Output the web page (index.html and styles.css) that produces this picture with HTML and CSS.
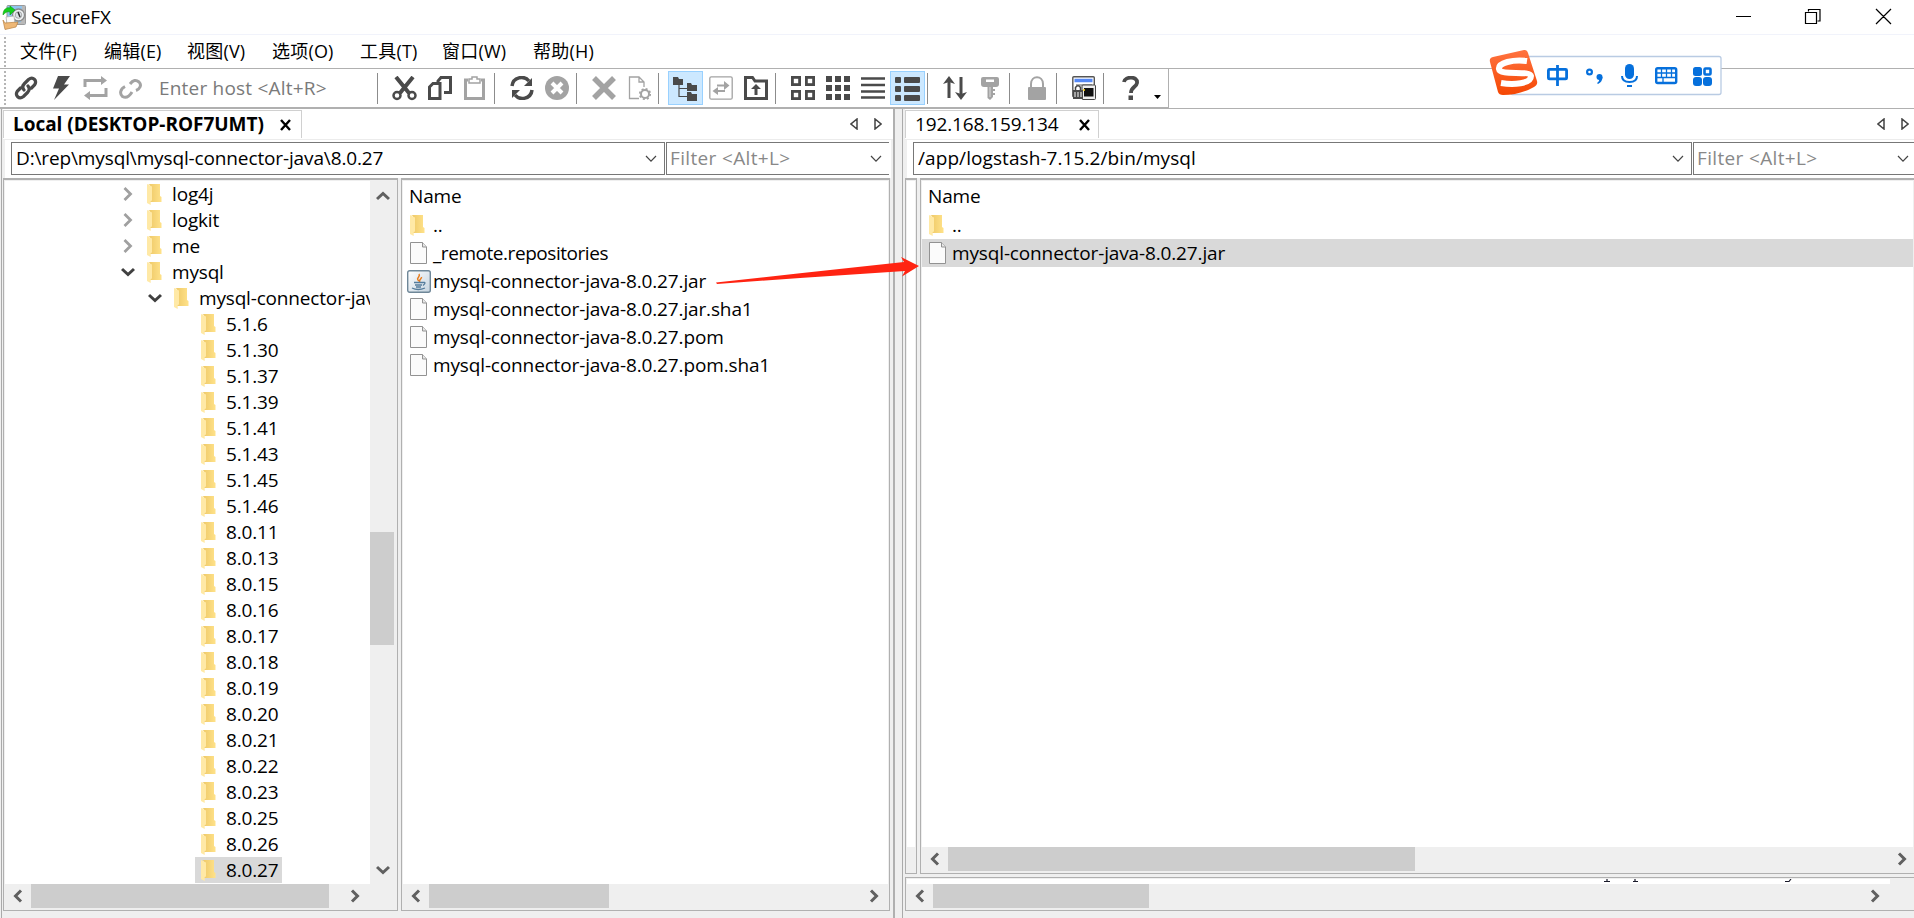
FILE: index.html
```html
<!DOCTYPE html>
<html lang="zh-CN">
<head>
<meta charset="utf-8">
<title>SecureFX</title>
<link rel="stylesheet" href="styles.css">
</head>
<body>
<svg class="defs" width="0" height="0">
  <defs>
    <linearGradient id="gold" x1="0" y1="0" x2="1" y2="0"><stop offset="0" stop-color="#edc765"/><stop offset="1" stop-color="#ffe28a"/></linearGradient>
    <linearGradient id="orange" x1="0" y1="0" x2="0" y2="1"><stop offset="0" stop-color="#ff7340"/><stop offset="1" stop-color="#f54703"/></linearGradient>
    <linearGradient id="steel" x1="0" y1="0" x2="1" y2="1"><stop offset="0" stop-color="#fff"/><stop offset="1" stop-color="#c5d3df"/></linearGradient>
    <symbol id="folder" viewBox="0 0 15 21"><path d="M1 0H13V12L14.500 13V18H3V1Z" fill="url(#gold)"/><path d="M0 0L5 2.500V16.500L3.700 17V21L0 19Z" fill="#ffe9a6"/></symbol>
    <symbol id="file" viewBox="0 0 18 22"><path d="M.5.5H12.500L16.500 5V21.500H.5Z" fill="#fbfbfb" stroke="#929292"/><path d="M12.500.5V5H16.500" fill="#e7e7e7" stroke="#929292"/></symbol>
    <symbol id="right" viewBox="0 0 10 14"><path d="M1.500 1L7.500 7L1.500 13" fill="none" stroke="currentColor" stroke-width="2.800"/></symbol>
    <symbol id="left" viewBox="0 0 10 14"><path d="M8 1.500L2.500 7L8 12.500" fill="none" stroke="#606060" stroke-width="3"/></symbol>
    <symbol id="next" viewBox="0 0 10 14"><path d="M2 1.500L7.500 7L2 12.500" fill="none" stroke="#606060" stroke-width="3"/></symbol>
    <symbol id="down" viewBox="0 0 14 10"><path d="M1 2L7 7.500L13 2" fill="none" stroke="currentColor" stroke-width="3"/></symbol>
    <symbol id="chev" viewBox="0 0 12 8"><path d="M1 1L6 6.200L11 1" fill="none" stroke="#444" stroke-width="1.200"/></symbol>
    <symbol id="cross" viewBox="0 0 12 12"><path d="M1.500 1L10.500 11M10.500 1L1.500 11" stroke="#000" stroke-width="2.400"/></symbol>
    <symbol id="navs" viewBox="0 0 32 12"><path d="M7 1V11L1 6ZM25 1V11L31 6Z" fill="none" stroke="#444" stroke-width="1.500"/></symbol>
  </defs>
</svg>

<header class="titlebar">
  <svg class="appicon" width="24" height="25" viewBox="0 0 24 25"><rect x="5" y=".5" width="18.500" height="19" rx="1" fill="#8fc4ef" stroke="#9a9a9a"/><path d="M20 1H23V19H12L19 17Z" fill="#b9b9b9"/><circle cx="16.500" cy="10" r="6" fill="#eef2f4" stroke="#8a8a8a" stroke-width="1.300"/><circle cx="16.500" cy="10" r="3.300" fill="#dbe2e7" stroke="#999" stroke-width=".8"/><path d="M16 7L18 12" stroke="#333" stroke-width="1.500"/><path d="M1 10C1 4 5 2 8 3V1L13 5L8 10V7C5 6 3 8 1 10Z" fill="#16cf1e" stroke="#0aa010" stroke-width=".6"/><path d="M4 12L12 11L13 19H5Z" fill="#fafafa" stroke="#aaa" stroke-width=".7"/><path d="M1 15L3 18L16 17L14 22L3 24.500Z" fill="#eeb877" stroke="#b98140" stroke-width=".7"/></svg>
  <span class="apptitle">SecureFX</span>
  <svg class="winctl" width="156" height="18" viewBox="0 0 156 18" fill="none" stroke="#000" stroke-width="1.200"><path d="M0 8.500H15M72.500 3.500V1.500H84V13H81.500M69.500 4.500H80.500V15.500H69.500ZM140 1L155 16M155 1L140 16"/></svg>
</header>

<nav class="menubar"><i class="grip"></i><span>文件(F)</span><span>编辑(E)</span><span>视图(V)</span><span>选项(O)</span><span>工具(T)</span><span>窗口(W)</span><span>帮助(H)</span></nav>

<div class="toolrow">
 <div class="toolbar">
  <i class="grip"></i>
  <b class="tool"><svg width="24" height="24" viewBox="0 0 24 24" fill="none" stroke="#4a4a4a" stroke-width="3.200" stroke-linecap="round"><path d="M10 14C8 11.500 8.500 9.500 10.500 7.500L14.500 3.500C19 0 23.500 4.500 20.500 9L17.500 12M14 10C16 12.500 15.500 14.500 13.500 16.500L9.500 20.500C5 24 .500 19.500 3.500 15L6.500 12"/></svg></b>
  <b class="tool"><svg width="24" height="24" viewBox="0 0 24 24"><path d="M9 0H21L15 8.500H20L5 24L10 12.500H4Z" fill="#4a4a4a"/></svg></b>
  <b class="tool"><svg width="25" height="24" viewBox="0 0 25 24"><path d="M2 11V4.500H19M23 12V19.500H6" fill="none" stroke="#a3a3a3" stroke-width="3"/><path d="M18 0L24 4.500L18 9ZM7 15L1 19.500L7 24Z" fill="#a3a3a3"/></svg></b>
  <b class="tool"><svg width="24" height="24" viewBox="0 0 24 24" fill="none" stroke="#a3a3a3" stroke-width="3"><path d="M11 8C14 4 17 3.500 20 6C23 9 21 13 17 14.500M13 16C10 21 7 22.500 3.500 20.500C.500 18 1 13 6 10.500"/></svg></b>
  <span class="host">Enter host &lt;Alt+R&gt;</span>
  <i class="sep"></i>
  <b class="tool"><svg width="25" height="25" viewBox="0 0 25 25" fill="none" stroke="#4a4a4a"><path d="M4 1L17 17M21 1L8 17" stroke-width="4"/><circle cx="5" cy="19.500" r="3.500" stroke-width="2.500"/><circle cx="20" cy="19.500" r="3.500" stroke-width="2.500"/></svg></b>
  <b class="tool"><svg width="24" height="24" viewBox="0 0 24 24" fill="none" stroke="#4a4a4a" stroke-width="3"><path d="M1.500 11L5 7.500H12V22.500H1.500ZM10 6V5L13 1.500H22.500V16.500H16"/></svg></b>
  <b class="tool"><svg width="24" height="24" viewBox="0 0 24 24" fill="none" stroke="#a3a3a3"><path d="M5 4H2.500V22.500H20.500V4H18" stroke-width="3"/><path d="M6 3H9V1H14V3H17V7H6Z" stroke-width="1.500"/></svg></b>
  <i class="sep"></i>
  <b class="tool"><svg width="24" height="24" viewBox="0 0 24 24"><path d="M2 10C3 1 14-1 19 5M22 14C21 23 10 25 5 19" fill="none" stroke="#4a4a4a" stroke-width="3.500"/><path d="M22 2V10H14ZM2 22V14H10Z" fill="#4a4a4a"/></svg></b>
  <b class="tool"><svg width="24" height="24" viewBox="0 0 24 24"><circle cx="12" cy="12" r="12" fill="#a3a3a3"/><path d="M7 7L17 17M17 7L7 17" stroke="#fff" stroke-width="4"/></svg></b>
  <i class="sep"></i>
  <b class="tool"><svg width="24" height="24" viewBox="0 0 24 24"><path d="M2 2L22 22M22 2L2 22" stroke="#a3a3a3" stroke-width="5.500"/></svg></b>
  <b class="tool"><svg width="24" height="24" viewBox="0 0 24 24" fill="none" stroke="#a3a3a3"><path d="M12 22.500H2.500V1H12L17 6V11M12 1V6H17" stroke-width="1.300"/><circle cx="18" cy="18" r="4" stroke-width="2"/><circle cx="18" cy="18" r="5.200" stroke-width="1.800" stroke-dasharray="2 2.080"/><circle cx="18" cy="18" r="2.300" fill="#fff" stroke="none"/></svg></b>
  <i class="sep"></i>
  <b class="tool on"><svg width="25" height="25" viewBox="0 0 25 25" fill="#4a4a4a"><path d="M0 1H5L6 3H10V9H0ZM14 7H18L19 9H24V15H14ZM14 16H18L19 18H24V25H14Z"/><path d="M6 8V20.500H14M6 12.500H14" fill="none" stroke="#4a4a4a" stroke-width="1.200"/></svg></b>
  <b class="tool"><svg width="24" height="24" viewBox="0 0 24 24"><rect x=".8" y=".8" width="22.400" height="22.400" rx="1.500" fill="none" stroke="#a3a3a3" stroke-width="1.300"/><path d="M8 9.500H17M7 15H16" stroke="#a3a3a3" stroke-width="2.200"/><path d="M15 5L20.500 9.500L15 14ZM9 11L3.500 15L9 19Z" fill="#a3a3a3"/></svg></b>
  <b class="tool"><svg width="24" height="24" viewBox="0 0 24 24"><path d="M1.500 22.500V1.500H8.500L11 5H22.500V22.500Z" fill="none" stroke="#4a4a4a" stroke-width="3"/><path d="M12 8L17 13H13.500V19H10.500V13H7Z" fill="#4a4a4a"/></svg></b>
  <i class="sep"></i>
  <b class="tool"><svg width="24" height="24" viewBox="0 0 24 24" fill="none" stroke="#4a4a4a" stroke-width="2.800"><rect x="1.400" y="1.400" width="7.200" height="7.200"/><rect x="15.400" y="1.400" width="7.200" height="7.200"/><rect x="1.400" y="15.400" width="7.200" height="7.200"/><rect x="15.400" y="15.400" width="7.200" height="7.200"/></svg></b>
  <b class="tool"><svg width="24" height="24" viewBox="0 0 24 24"><path d="M0 3H6M9 3H15M18 3H24M0 12H6M9 12H15M18 12H24M0 21H6M9 21H15M18 21H24" stroke="#4a4a4a" stroke-width="5.800"/></svg></b>
  <b class="tool"><svg width="24" height="24" viewBox="0 0 24 24"><path d="M0 2.500H24M0 9H24M0 15.500H24M0 21.500H24" stroke="#4a4a4a" stroke-width="2.600"/></svg></b>
  <b class="tool on"><svg width="25" height="25" viewBox="0 0 25 25" fill="#4a4a4a"><rect y="1" width="6" height="6" rx="1"/><rect x="9" y="1" width="16" height="6" rx="1"/><rect y="10" width="6" height="6" rx="1"/><rect x="9" y="10" width="16" height="6" rx="1"/><rect y="19" width="6" height="6" rx="1"/><rect x="9" y="19" width="16" height="6" rx="1"/></svg></b>
  <i class="sep"></i>
  <b class="tool"><svg width="24" height="24" viewBox="0 0 24 24"><path d="M6 4V22M18 1V20" stroke="#4a4a4a" stroke-width="3"/><path d="M6 0L12 8L6 6L0 8ZM18 24L12 16L18 18L24 16Z" fill="#4a4a4a"/></svg></b>
  <b class="tool"><svg width="24" height="24" viewBox="0 0 24 24"><path fill-rule="evenodd" d="M5 1H19Q21 1 21 3V8Q21 11 18 11H15V21L12 24L9.500 22V11H6Q3 11 3 8V3Q3 1 5 1ZM8 3.500V6H16V3.500Z" fill="#a3a3a3"/><path d="M12 11V21" stroke="#ddd"/><path d="M14 14H17M14 18H17" stroke="#a3a3a3" stroke-width="2"/></svg></b>
  <i class="sep"></i>
  <b class="tool"><svg width="24" height="24" viewBox="0 0 24 24"><rect x="3" y="11" width="18" height="13" rx="1" fill="#a3a3a3"/><path d="M6 12V8C6-1 18-1 18 8V12" fill="none" stroke="#a3a3a3" stroke-width="2"/></svg></b>
  <i class="sep"></i>
  <b class="tool"><svg width="24" height="24" viewBox="0 0 24 24"><rect x=".8" y=".8" width="21.500" height="20" rx="1" fill="#fff" stroke="#555" stroke-width="1.400"/><path d="M2.500 4.500H20.500" stroke="#5588f5" stroke-width="3.500"/><path d="M4 9H20" stroke="#555"/><rect x="10" y="9" width="13.500" height="14.500" rx="1" fill="#eee" stroke="#444"/><rect x="12" y="12" width="9.500" height="8.500" fill="#111"/><path d="M3.500 14V11.500Q6 8 8.500 11.500V14" fill="none" stroke="#444" stroke-width="1.500"/><path d="M1 14H11V23H1Z" fill="#4a4a4a"/><path d="M3 16V21M6 16V21M9 16V21" stroke="#fff"/><circle cx="12" cy="14" r="1" fill="#ffd51b"/></svg></b>
  <i class="sep"></i>
  <b class="tool"><svg width="24" height="24" viewBox="0 0 24 24"><path d="M5 6C6 0 19 0 18 7C17.500 11 12 11 12 17" fill="none" stroke="#4a4a4a" stroke-width="3.800"/><rect x="9.500" y="19.500" width="4.500" height="4.500" fill="#4a4a4a"/></svg></b>
  <svg class="more" width="8" height="5" viewBox="0 0 8 5"><path d="M0 0H7L3.500 4Z"/></svg>
 </div>
</div>

<main class="work">
 <section class="side local">
  <div class="tabs"><div class="tab bold"><span class="t-tab1">Local (DESKTOP-ROF7UMT)</span><svg width="13" height="12"><use href="#cross"/></svg></div><svg class="navs" width="32" height="12"><use href="#navs"/></svg></div>
  <div class="fields"><div class="combo path"><span class="t-path1">D:\rep\mysql\mysql-connector-java\8.0.27</span><svg width="12" height="8"><use href="#chev"/></svg></div><div class="combo filter"><span>Filter &lt;Alt+L&gt;</span><svg width="12" height="8"><use href="#chev"/></svg></div></div>
  <div class="panes">
   <div class="pane tree">
    <div class="treetop">
     <div class="rows">
      <div class="row l0"><svg class="exp" width="10" height="14"><use href="#right"/></svg><svg width="15" height="21"><use href="#folder"/></svg><span>log4j</span></div>
      <div class="row l0"><svg class="exp" width="10" height="14"><use href="#right"/></svg><svg width="15" height="21"><use href="#folder"/></svg><span>logkit</span></div>
      <div class="row l0"><svg class="exp" width="10" height="14"><use href="#right"/></svg><svg width="15" height="21"><use href="#folder"/></svg><span>me</span></div>
      <div class="row l0"><svg class="exp open" width="14" height="10"><use href="#down"/></svg><svg width="15" height="21"><use href="#folder"/></svg><span>mysql</span></div>
      <div class="row l1"><svg class="exp open" width="14" height="10"><use href="#down"/></svg><svg width="15" height="21"><use href="#folder"/></svg><span>mysql-connector-java</span></div>
      <div class="row l2"><svg width="15" height="21"><use href="#folder"/></svg><span>5.1.6</span></div>
      <div class="row l2"><svg width="15" height="21"><use href="#folder"/></svg><span>5.1.30</span></div>
      <div class="row l2"><svg width="15" height="21"><use href="#folder"/></svg><span>5.1.37</span></div>
      <div class="row l2"><svg width="15" height="21"><use href="#folder"/></svg><span>5.1.39</span></div>
      <div class="row l2"><svg width="15" height="21"><use href="#folder"/></svg><span>5.1.41</span></div>
      <div class="row l2"><svg width="15" height="21"><use href="#folder"/></svg><span>5.1.43</span></div>
      <div class="row l2"><svg width="15" height="21"><use href="#folder"/></svg><span>5.1.45</span></div>
      <div class="row l2"><svg width="15" height="21"><use href="#folder"/></svg><span>5.1.46</span></div>
      <div class="row l2"><svg width="15" height="21"><use href="#folder"/></svg><span>8.0.11</span></div>
      <div class="row l2"><svg width="15" height="21"><use href="#folder"/></svg><span>8.0.13</span></div>
      <div class="row l2"><svg width="15" height="21"><use href="#folder"/></svg><span>8.0.15</span></div>
      <div class="row l2"><svg width="15" height="21"><use href="#folder"/></svg><span>8.0.16</span></div>
      <div class="row l2"><svg width="15" height="21"><use href="#folder"/></svg><span>8.0.17</span></div>
      <div class="row l2"><svg width="15" height="21"><use href="#folder"/></svg><span>8.0.18</span></div>
      <div class="row l2"><svg width="15" height="21"><use href="#folder"/></svg><span>8.0.19</span></div>
      <div class="row l2"><svg width="15" height="21"><use href="#folder"/></svg><span>8.0.20</span></div>
      <div class="row l2"><svg width="15" height="21"><use href="#folder"/></svg><span>8.0.21</span></div>
      <div class="row l2"><svg width="15" height="21"><use href="#folder"/></svg><span>8.0.22</span></div>
      <div class="row l2"><svg width="15" height="21"><use href="#folder"/></svg><span>8.0.23</span></div>
      <div class="row l2"><svg width="15" height="21"><use href="#folder"/></svg><span>8.0.25</span></div>
      <div class="row l2"><svg width="15" height="21"><use href="#folder"/></svg><span>8.0.26</span></div>
      <div class="row l2 current"><svg width="15" height="21"><use href="#folder"/></svg><span>8.0.27</span></div>
     </div>
     <div class="vscroll"><svg class="up" width="14" height="10"><use href="#down"/></svg><i class="vthumb"></i><svg width="14" height="10"><use href="#down"/></svg></div>
    </div>
    <div class="hscroll"><svg width="10" height="14"><use href="#left"/></svg><i class="thumb w298"></i><svg class="end" width="10" height="14"><use href="#next"/></svg></div>
   </div>
   <div class="pane list">
    <div class="files">
     <div class="head">Name</div>
     <div class="item"><b><svg width="15" height="21"><use href="#folder"/></svg></b><span>..</span></div>
     <div class="item repo"><b><svg width="18" height="22"><use href="#file"/></svg></b><span>_remote.repositories</span></div>
     <div class="item"><b><svg class="jar" width="24" height="23" viewBox="0 0 24 23"><rect x=".7" y=".7" width="22.600" height="21.600" rx="2" fill="url(#steel)" stroke="#6f8798" stroke-width="1.400"/><path d="M12 11C8 8 14 7 12 4M13 12C11 10 15 9 14.500 7" fill="none" stroke="#e87d1e" stroke-width="1.500"/><path d="M7 12.500H16M8 15H15M9 17H14M16 12.500Q20 12 16 15.500M5 18Q11 21 18 18" fill="none" stroke="#557c9c" stroke-width="1.300"/></svg></b><span>mysql-connector-java-8.0.27.jar</span></div>
     <div class="item"><b><svg width="18" height="22"><use href="#file"/></svg></b><span>mysql-connector-java-8.0.27.jar.sha1</span></div>
     <div class="item"><b><svg width="18" height="22"><use href="#file"/></svg></b><span>mysql-connector-java-8.0.27.pom</span></div>
     <div class="item"><b><svg width="18" height="22"><use href="#file"/></svg></b><span>mysql-connector-java-8.0.27.pom.sha1</span></div>
    </div>
    <div class="hscroll"><svg width="10" height="14"><use href="#left"/></svg><i class="thumb w180"></i><svg width="10" height="14"><use href="#next"/></svg></div>
   </div>
  </div>
 </section>
 <i class="splitter"></i>
 <section class="side remote">
  <div class="tabs"><div class="tab"><span class="t-tab2">192.168.159.134</span><svg width="13" height="12"><use href="#cross"/></svg></div><svg class="navs" width="32" height="12"><use href="#navs"/></svg></div>
  <div class="fields"><div class="combo path"><span class="t-path2">/app/logstash-7.15.2/bin/mysql</span><svg width="12" height="8"><use href="#chev"/></svg></div><div class="combo filter"><span>Filter &lt;Alt+L&gt;</span><svg width="12" height="8"><use href="#chev"/></svg></div></div>
  <div class="panes">
   <div class="pane sliver"><div class="files"></div><div class="stub"></div></div>
   <div class="pane list">
    <div class="files">
     <div class="head">Name</div>
     <div class="item"><b><svg width="15" height="21"><use href="#folder"/></svg></b><span>..</span></div>
     <div class="item selected"><b><svg width="18" height="22"><use href="#file"/></svg></b><span>mysql-connector-java-8.0.27.jar</span></div>
    </div>
    <div class="hscroll"><svg width="10" height="14"><use href="#left"/></svg><i class="thumb w467"></i><svg width="10" height="14"><use href="#next"/></svg></div>
   </div>
  </div>
  <div class="pane queue"><div class="strip"><svg width="190" height="5" viewBox="0 0 190 5"><path d="M0 2.500H6M3 0V2M29 2.500H34M31 0V2M181 2.500H185L187 0" fill="none" stroke="#1a1a2a" stroke-width="1.200"/></svg></div><div class="hscroll"><svg width="10" height="14"><use href="#left"/></svg><i class="thumb w216"></i><svg class="end" width="10" height="14"><use href="#next"/></svg></div></div>
 </section>
</main>

<svg class="pointer" width="206" height="32" viewBox="714 253 206 32"><path d="M716 282.500L800 273.300L904 262L901 257L919 266L902 276.500L905 271L800 278L717 284Z" fill="#ff2412"/></svg>

<svg class="ime" width="234" height="50" viewBox="1489 48 234 50">
  <rect x="1510.500" y="56.500" width="210.500" height="38" rx="2" fill="#fff" stroke="#b9cbe3" stroke-width="1.300"/>
  <path d="M1493 57L1524 50Q1527 49.500 1528 53L1537 81Q1538 85 1534 87Q1520 95 1503 95Q1499 95 1498 92L1490 62Q1489 58 1493 57Z" fill="url(#orange)"/>
  <path d="M1527 61C1513 59 1498 63 1499 69C1500 76 1530 70 1531 76C1531 84 1513 85 1501 83" fill="none" stroke="#fff" stroke-width="6"/>
  <g fill="none" stroke="#0670dc" stroke-width="2.800"><rect x="1548.400" y="69.400" width="18.200" height="9.500" rx="1"/><path d="M1557.500 65V86"/><circle cx="1589.500" cy="72" r="2.400" stroke-width="2.200"/><path d="M1622 76Q1622 82 1629.500 82Q1637 82 1637 76M1627 86H1632" stroke-width="2"/><rect x="1656.200" y="68.200" width="20" height="14.800" rx="1.500" stroke-width="2.400"/><path d="M1657 73H1676M1657 77.500H1676M1661.500 69V78M1666.500 69V78M1671.500 69V78M1663 78V83" stroke-width="1.300"/></g>
  <g fill="#0670dc"><circle cx="1599.500" cy="77" r="3"/><path d="M1602.500 77Q1602.500 82 1598 84L1597 83Q1600 81 1599 78Z"/><rect x="1625" y="64" width="9" height="15" rx="4.500"/><rect x="1693" y="67" width="9" height="9" rx="2.500"/><rect x="1693" y="77" width="9" height="9" rx="3"/><rect x="1703" y="77" width="9" height="9" rx="3"/></g>
  <rect x="1704.500" y="68.500" width="6" height="6" rx="1" fill="#fff" stroke="#0670dc" stroke-width="2.600"/>
</svg>
</body>
</html>
```
FILE: styles.css
```css
* { box-sizing: border-box; }
body { margin: 0; width: 1914px; height: 918px; overflow: hidden; position: relative; display: flex; flex-direction: column; background: #fff; color: #000; font: 19px/26px "Open Sans", "Noto Sans CJK SC", sans-serif; letter-spacing: -0.17px; white-space: nowrap; }
svg { display: block; flex: none; }
.defs { position: absolute; }
i, b { display: block; flex: none; font-style: normal; font-weight: normal; }

.titlebar { height: 35px; flex: none; display: flex; align-items: flex-start; padding: 5px 22px 0 2px; border-bottom: 1px solid #f1f3fb; }
.apptitle { margin-left: 5px; line-height: 25px; }
.winctl { margin: 3px 0 0 auto; }

.menubar { height: 34px; flex: none; display: grid; grid-template-columns: 20px 84px 83px 85px 88px 82px 91px 100px; align-items: center; border-bottom: 1px solid #b0b0b0; font-size: 18px; letter-spacing: 0.2px; }
.menubar span { padding-bottom: 2px; }
.grip { width: 2px; height: 30px; margin-left: 4px; background: repeating-linear-gradient(#b5b5b5 0 2px, #fff 2px 4px); }

.toolrow { height: 40px; flex: none; border-bottom: 1px solid #b0b0b0; }
.toolbar { width: 1169px; height: 39px; display: flex; align-items: flex-start; padding-top: 2px; border-right: 1px solid #b0b0b0; border-bottom: 1px solid #b0b0b0; }
.toolbar .grip { height: 34px; margin-right: 2px; }
.tool { width: 35px; height: 34px; display: flex; align-items: center; justify-content: center; }
.tool.on { background: #cce8ff; border: 1px solid #99d1ff; }
.sep { width: 1px; height: 31px; margin: 2px 9px 0 2px; background: #8c8c8c; }
.host { width: 227px; padding-left: 11px; line-height: 34px; color: #7a7a7a; letter-spacing: 0.2px; }
.more { margin: 24px 0 0 6px; }

.work { flex: 1; display: flex; min-height: 0; background: #efefef; }
.side { display: flex; flex-direction: column; border-left: 1px solid #aaa; padding: 0 0 7px 2px; }
.local { width: 893px; margin-left: 1px; padding-left: 1px; }
.remote { width: 1012px; border-left: 1px solid #aaa; }
.splitter { width: 9px; border-left: 2px solid #b0b0b0; margin-left: -1px; }
.tabs { height: 31px; flex: none; display: flex; background: #fff; border-bottom: 1px solid #ececec; padding-top: 1px; }
.tab { display: flex; align-items: center; justify-content: space-between; width: 299px; height: 28px; padding: 0 9px 2px; border: 1px solid #d0d0d0; border-bottom: 0; }
.tab svg { margin-top: 2px; }
.bold { font-weight: bold; letter-spacing: -0.03px; }
.remote .tab { width: 194px; padding: 0 7px 2px 9px; letter-spacing: -0.12px; }
.navs { margin: 8px 12px 0 auto; }
.remote .navs { margin-right: 5px; }
.fields { height: 38px; flex: none; display: flex; padding: 2px 0 0 6px; gap: 1px; background: #fff; border-left: 2px solid #efefef; }
.local .fields { margin-right: 3px; }
.combo { height: 33px; display: flex; align-items: center; justify-content: space-between; border: 1px solid #777; background: #fff; padding: 0 7px 0 4px; }
.combo span { padding-bottom: 2px; }
.local .path { width: 654px; letter-spacing: -0.13px; }
.local .filter { width: 223px; border-right: 0; padding: 0 7px 0 3px; }
.remote .path { width: 779px; letter-spacing: 0.08px; }
.remote .filter { flex: 1; border-right: 0; padding-right: 5px; padding-left: 3px; }
.filter span { color: #888; letter-spacing: 0.35px; }
.panes { flex: 1; min-height: 0; display: flex; gap: 3px; }
.pane { display: flex; flex-direction: column; border: 1px solid #b0b0b0; border-top-width: 2px; padding: 1px 1px 0; }
.tree { width: 395px; }
.treetop { flex: 1; min-height: 0; display: flex; }
.rows { width: 366px; background: #fff; overflow: hidden; }
.row { height: 26px; display: flex; align-items: center; gap: 10px; }
.row .exp { width: 14px; color: #a0a0a0; margin-right: 2px; }
.row .exp.open { color: #404040; }
.l0 { padding-left: 116px; }
.l1 { padding-left: 143px; }
.l2 { padding-left: 6px; margin-left: 190px; width: 87px; }
.current { background: #d9d9d9; }
.vscroll { width: 26px; padding: 10px 0 9px 6px; display: flex; flex-direction: column; color: #606060; }
.vscroll .up { transform: rotate(180deg); }
.vthumb { width: 24px; height: 113px; margin: 331px 0 auto -6px; background: #cdcdcd; }
.hscroll { height: 26px; flex: none; display: flex; align-items: center; justify-content: space-between; padding: 0 9px 2px 8px; background: #efefef; }
.thumb { height: 24px; margin: 0 auto 0 8px; background: #cdcdcd; }
.w298 { width: 298px; }
.w180 { width: 180px; }
.w467 { width: 467px; }
.w216 { width: 216px; }
.end { margin-right: 27px; }
.local .list { width: 489px; }
.files { flex: 1; min-height: 0; background: #fff; }
.head { height: 30px; line-height: 30px; padding-left: 6px; }
.item { height: 28px; display: flex; align-items: center; letter-spacing: -0.14px; }
.item b { width: 30px; padding-left: 7px; }
.item .jar { margin-left: -3px; }
.repo { letter-spacing: -0.45px; }
.selected { background: #d9d9d9; }
.sliver { width: 12px; }
.stub { height: 26px; flex: none; }
.remote .list { flex: 1; border-right: 0; }
.remote .list .hscroll { padding-right: 6px; }
.queue { height: 34px; flex: none; margin-top: 3px; border-top-width: 1px; border-right: 0; }
.queue .end { margin-right: 24px; }
.strip { height: 5px; flex: none; background: #fff; margin-right: 23px; }
.strip svg { margin-left: 697px; }
.pointer { position: absolute; left: 714px; top: 253px; }
.ime { position: absolute; left: 1489px; top: 48px; }
```
